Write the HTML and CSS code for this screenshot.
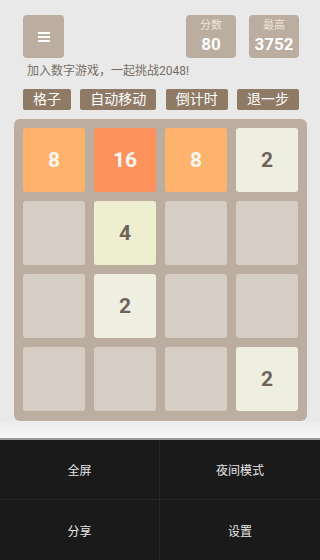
FILE: index.html
```html
<!DOCTYPE html>
<html>
<head>
<meta charset="utf-8">
<link rel="stylesheet" href="styles.css">
</head>
<body>
<div class="app">
  <div class="header">
    <div class="menu-btn">
      <svg width="12" height="10" viewBox="0 0 12 10"><rect x="0" y="0" width="12" height="2" fill="#fff"/><rect x="0" y="4" width="12" height="2" fill="#fff"/><rect x="0" y="8" width="12" height="2" fill="#fff"/></svg>
    </div>
    <div class="scores">
      <div class="score-box"><div class="label">分数</div><div class="value">80</div></div>
      <div class="score-box"><div class="label">最高</div><div class="value">3752</div></div>
    </div>
  </div>
  <div class="subtitle">加入数字游戏，一起挑战2048!</div>
  <div class="actions">
    <div class="action">格子</div>
    <div class="action">自动移动</div>
    <div class="action">倒计时</div>
    <div class="action">退一步</div>
  </div>
  <div class="board">
    <div class="tile t8">8</div>
    <div class="tile t16">16</div>
    <div class="tile t8">8</div>
    <div class="tile t2">2</div>
    <div class="tile"></div>
    <div class="tile t4">4</div>
    <div class="tile"></div>
    <div class="tile"></div>
    <div class="tile"></div>
    <div class="tile t2">2</div>
    <div class="tile"></div>
    <div class="tile"></div>
    <div class="tile"></div>
    <div class="tile"></div>
    <div class="tile"></div>
    <div class="tile t2">2</div>
  </div>
  <div class="spacer"></div>
  <div class="bottom-menu">
    <div class="menu-item">全屏</div>
    <div class="menu-item">夜间模式</div>
    <div class="menu-item">分享</div>
    <div class="menu-item">设置</div>
  </div>
</div>
</body>
</html>
```
FILE: styles.css
```css
* { box-sizing: border-box; }
html, body {
  margin: 0;
  padding: 0;
  width: 320px;
  height: 560px;
  overflow: hidden;
}
body {
  background: #e9e9e9;
  font-family: Roboto, "Noto Sans CJK SC", sans-serif;
}
.app {
  display: flex;
  flex-direction: column;
  height: 560px;
}
.header {
  display: flex;
  justify-content: space-between;
  padding: 15px 21px 0 23px;
}
.menu-btn {
  width: 41px;
  height: 43px;
  background: #bbada0;
  border-radius: 4px;
  display: flex;
  align-items: center;
  justify-content: center;
}
.scores {
  display: flex;
  gap: 13px;
}
.score-box {
  width: 50px;
  height: 43px;
  background: #bbada0;
  border-radius: 4px;
  display: flex;
  flex-direction: column;
  align-items: center;
  padding-top: 4px;
}
.score-box .label {
  font-size: 11px;
  line-height: 14px;
  color: #eee4da;
}
.score-box .value {
  font-size: 17px;
  font-weight: bold;
  line-height: 22px;
  color: #fff;
}
.subtitle {
  padding: 5px 0 0 27px;
  font-size: 12px;
  line-height: 16px;
  color: #776e65;
}
.actions {
  display: flex;
  justify-content: space-between;
  padding: 0 21px 0 23px;
  margin-top: 10px;
}
.action {
  height: 21px;
  padding: 0 10px;
  background: #8f7a66;
  color: #fff;
  font-size: 14px;
  line-height: 21px;
  border-radius: 2px;
}
.board {
  margin: 9px 0 0 14px;
  width: 293px;
  height: 302px;
  background: #bbada0;
  border-radius: 6px;
  padding: 9px;
  display: grid;
  grid-template-columns: repeat(4, 62px);
  grid-template-rows: repeat(4, 64px);
  gap: 9px;
}
.tile {
  background: #d6cdc4;
  border-radius: 3px;
  display: flex;
  align-items: center;
  justify-content: center;
  font-size: 21px;
  font-weight: bold;
  color: #6e625d;
}
.t2 { background: #eeefe1; }
.t4 { background: #eeeed0; }
.t8 { background: #feb36c; color: #f9f6f2; }
.t16 { background: #fe925c; color: #f9f6f2; }
.spacer {
  flex: 1;
  background: linear-gradient(#ececec, #f6f6f6);
  border-bottom: 2px solid #9a9a9a;
}
.bottom-menu {
  height: 120px;
  background: #1a1a1a;
  display: grid;
  grid-template-columns: 1fr 1fr;
  grid-template-rows: 60px 60px;
}
.menu-item {
  display: flex;
  align-items: center;
  justify-content: center;
  color: #e6e6e6;
  font-size: 12px;
  border-right: 1px solid #252525;
  border-bottom: 1px solid #252525;
}
.menu-item:nth-child(2n) { border-right: none; }
.menu-item:nth-child(n+3) { border-bottom: none; }
```
